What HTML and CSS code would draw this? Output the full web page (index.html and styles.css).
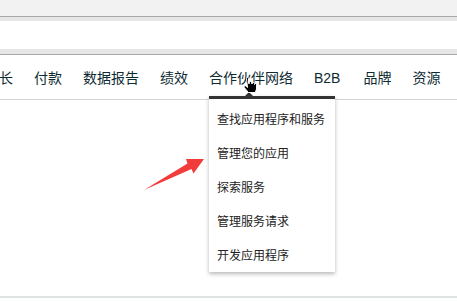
FILE: index.html
```html
<!DOCTYPE html>
<html lang="zh">
  <head>
    <meta charset="UTF-8" />
    <title>合作伙伴网络</title>
    <link rel="stylesheet" href="styles.css">
  </head>
  <body>
    <div class="chrome">
      <div class="chrome-top"></div>
      <div class="chrome-band"></div>
      <div class="chrome-field"></div>
      <div class="chrome-band bottom"></div>
    </div>

    <div class="nav">
      <a href="#" class="nav-link first">长</a>
      <a href="#" class="nav-link">付款</a>
      <a href="#" class="nav-link">数据报告</a>
      <a href="#" class="nav-link">绩效</a>
      <a href="#" class="nav-link">合作伙伴网络</a>
      <a href="#" class="nav-link">B2B</a>
      <a href="#" class="nav-link">品牌</a>
      <a href="#" class="nav-link">资源</a>

      <div class="dropdown">
        <span class="caret"></span>
        <a href="#" class="menu-item">查找应用程序和服务</a>
        <a href="#" class="menu-item">管理您的应用</a>
        <a href="#" class="menu-item">探索服务</a>
        <a href="#" class="menu-item">管理服务请求</a>
        <a href="#" class="menu-item">开发应用程序</a>
      </div>

      <svg class="cursor" width="16" height="17" viewBox="0 0 16 17">
        <path d="M4.5 1.5a1 1 0 0 1 2 0v5h1v-1a1 1 0 0 1 2 0v1h1a1 1 0 0 1 2 0v1a1 1 0 0 1 2 0v4.5l-1.2 3.5h-7l-4-5a1 1 0 0 1 1.8-1.2l1.4 1.2z"
              fill="#000" stroke="#fff" stroke-width="1" />
      </svg>
    </div>

    <div class="content"></div>

    <!-- annotation arrow -->
    <svg class="arrow" width="70" height="45" viewBox="0 0 70 45">
      <polygon points="4,40 47.5,13.5 46,9 64,9 53.5,23.5 51.5,19" fill="#f23c3c" />
    </svg>
  </body>
</html>
```

FILE: styles.css
```css
* {
  margin: 0;
  padding: 0;
  box-sizing: border-box;
}

body {
  background: #ffffff;
  font-family: "Liberation Sans", "Noto Sans CJK SC", sans-serif;
  position: relative;
  overflow: hidden;
  height: 301px;
}

/* browser-ish bars at the top */
.chrome-top {
  height: 17px;
  background: #f2f2f2;
  border-bottom: 1px solid #a9a9a9;
}

.chrome-band {
  height: 4px;
  background: #e6e6e6;
}

.chrome-band.bottom {
  height: 6px;
  border-bottom: 1px solid #a9a9a9;
}

.chrome-field {
  height: 28px;
  background: #ffffff;
}

/* nav */
.nav {
  position: relative;
  height: 45px;
  display: flex;
  align-items: center;
  gap: 21px;
  border-bottom: 1px solid #d4d4d4;
  padding-top: 1px;
}

.nav-link {
  font-size: 14px;
  line-height: 20px;
  color: #0e2b33;
  text-decoration: none;
  white-space: nowrap;
}

.nav-link.first {
  margin-left: -1px;
}

.nav-link:nth-child(7) {
  margin-left: 2px;
}

.dropdown {
  position: absolute;
  left: 209px;
  top: 41px;
  width: 126px;
  background: #ffffff;
  border-top: 3px solid #333333;
  padding: 2px 0 1px;
  box-shadow: 0 2px 4px rgba(0, 0, 0, 0.28);
  display: flex;
  flex-direction: column;
  z-index: 5;
}

.caret {
  position: absolute;
  left: 36px;
  top: -7px;
  border-left: 4px solid transparent;
  border-right: 4px solid transparent;
  border-bottom: 4px solid #333333;
}

.menu-item {
  height: 34px;
  display: flex;
  align-items: center;
  padding-left: 8px;
  font-family: "Noto Sans CJK SC", sans-serif;
  font-size: 12px;
  color: #222222;
  text-decoration: none;
  white-space: nowrap;
}

.cursor {
  position: absolute;
  left: 242px;
  top: 22px;
  z-index: 6;
}

.content {
  height: 198px;
  border-bottom: 2px solid #e0e3e3;
}

.arrow {
  position: absolute;
  left: 140px;
  top: 150px;
}
```
